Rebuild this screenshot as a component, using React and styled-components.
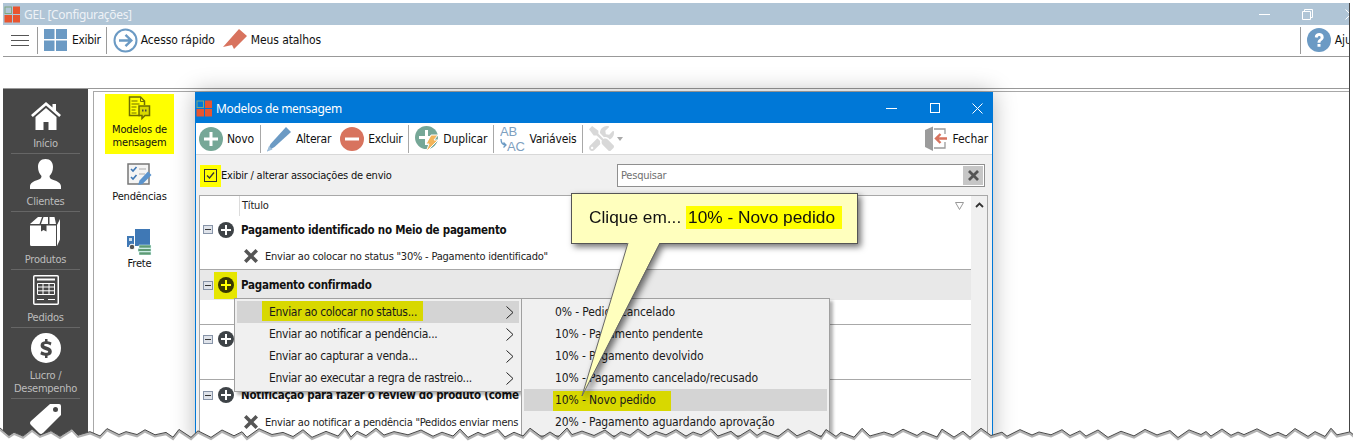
import React from "react";
import styled, { createGlobalStyle } from "styled-components";
import { FaTools } from "react-icons/fa";

const Global = createGlobalStyle`
  html, body { margin: 0; background: #fff; }
  body { font-family: "DejaVu Sans", "Liberation Sans", sans-serif; font-stretch: condensed; font-size: 12px; color: #111; }
  * { box-sizing: border-box; }
`;

const Page = styled.div`
  position: relative;
  width: 1353px;
  height: 448px;
  overflow: hidden;
  background: #fff;
`;
const AppWindow = styled.div`
  margin: 3px 0 0 3px;
  width: 1347px;
  height: 440px;
  display: flex;
  flex-direction: column;
  overflow: hidden;
  background: #fff;
  border-right: 1px solid #444;
`;
const TitleBar = styled.div`
  height: 22px;
  flex: none;
  display: flex;
  align-items: center;
  background: #b0c5d6;
  color: #eef2f6;
  padding-left: 21px;
  font-family: "Noto Sans", sans-serif;
  font-stretch: normal;
  position: relative;
`;
const LogoSlot = styled.span`
  position: absolute;
  left: ${(p) => p.$left}px;
  top: ${(p) => p.$top}px;
  display: flex;
`;
const Caption = styled.div`
  flex: 1;
  font-size: 12px;
  letter-spacing: -0.33px;
`;
const Controls = styled.div`
  display: flex;
  align-items: center;
  width: ${(p) => p.$width}px;
  justify-content: space-between;
  margin-right: ${(p) => p.$right}px;
  flex: none;
`;
const MainBar = styled.div`
  height: 32px;
  flex: none;
  display: flex;
  align-items: center;
  border-bottom: 1px solid #999;
  padding-bottom: 1px;
`;
const Burger = styled.div`
  width: 34px;
  display: flex;
  justify-content: center;
`;
const VSep = styled.span`
  width: 1px;
  height: 27px;
  background: #9a9a9a;
  flex: none;
`;
const BarButton = styled.div`
  display: flex;
  align-items: center;
  flex: none;
  gap: ${(p) => p.$gap ?? 4}px;
  padding: 0 ${(p) => p.$pr ?? 0}px 0 ${(p) => p.$pl ?? 0}px;
  margin-right: ${(p) => p.$mr ?? 0}px;
  white-space: nowrap;
  letter-spacing: ${(p) => p.$ls ?? -0.1}px;
`;
const Blank = styled.div`
  height: 32px;
  flex: none;
  border-bottom: 1px solid #999;
`;
const Main = styled.div`
  flex: 1;
  display: flex;
  min-height: 0;
`;
const Sidebar = styled.nav`
  width: 85px;
  flex: none;
  background: #474747;
  padding-top: 7px;
  display: flex;
  flex-direction: column;
  align-items: stretch;
`;
const NavItem = styled.div`
  flex: none;
  margin: 0 8px;
  padding: 5px 0 3px;
  min-height: 58px;
  display: flex;
  flex-direction: column;
  align-items: center;
  border-bottom: 1px solid #666;
`;
const NavIcon = styled.div`
  height: 30px;
  display: flex;
  align-items: center;
  justify-content: center;
`;
const NavLabel = styled.div`
  margin-top: 6px;
  line-height: 13px;
  font-size: 11px;
  letter-spacing: -0.25px;
  color: #bdbdbd;
  text-align: center;
  white-space: nowrap;
`;
const Panel = styled.div`
  margin: 2px 0 0 5px;
  flex: 1;
  border-left: 1px solid #a8a8a8;
  border-top: 1px solid #a8a8a8;
  padding: 2px 0 0 11px;
  display: flex;
  flex-direction: column;
  gap: 7px;
`;
const Tile = styled.div`
  width: 69px;
  height: 60px;
  padding-top: 1px;
  display: flex;
  flex-direction: column;
  align-items: center;
  background: ${(p) => (p.$on ? "#ffff00" : "transparent")};
`;
const TileIcon = styled.div`
  height: 26px;
  display: flex;
  align-items: center;
  justify-content: center;
`;
const TileLabel = styled.div`
  margin-top: 2px;
  line-height: 13px;
  font-size: 11px;
  letter-spacing: -0.15px;
  text-align: center;
  white-space: nowrap;
`;
const Dialog = styled.section`
  position: absolute;
  left: 195px;
  top: 92px;
  width: 798px;
  height: 356px;
  border: 1px solid #0078d7;
  border-bottom: 0;
  background: #f0f0f0;
  box-shadow: 0 0 22px rgba(0, 0, 0, 0.28);
  display: flex;
  flex-direction: column;
`;
const DialogTitle = styled.div`
  height: 30px;
  flex: none;
  background: #0078d7;
  color: #fff;
  display: flex;
  align-items: center;
  padding-left: 20px;
  font-family: "Noto Sans", sans-serif;
  font-stretch: normal;
  font-size: 12px;
  position: relative;
`;
const DialogBar = styled.div`
  height: 32px;
  flex: none;
  background: #fff;
  border-bottom: 1px solid #d8d8d8;
  display: flex;
  align-items: center;
  padding-left: 3px;
`;
const ToolSep = styled(VSep)`
  height: 28px;
  background: #a8a8a8;
  margin: 0 6px;
`;
const Spacer = styled.div`
  flex: 1;
`;
const FilterRow = styled.div`
  height: 23px;
  margin-top: 9px;
  flex: none;
  display: flex;
  align-items: center;
  padding-left: 4px;
  font-size: 11px;
  letter-spacing: -0.22px;
`;
const CheckMark = styled.span`
  width: 21px;
  height: 22px;
  background: #ffff00;
  display: flex;
  align-items: center;
  justify-content: center;
  flex: none;
`;
const Search = styled.div`
  margin-left: auto;
  margin-right: 7px;
  width: 368px;
  height: 23px;
  border: 1px solid #8f8f8f;
  background: #fff;
  display: flex;
  align-items: center;
  padding: 1px;
  color: #707070;
`;
const SearchText = styled.span`
  flex: 1;
  padding-left: 2px;
`;
const SearchClear = styled.span`
  width: 20px;
  height: 19px;
  background: #c6c6c6;
  display: flex;
  align-items: center;
  justify-content: center;
`;
const Grid = styled.div`
  margin: 8px 0 0 3px;
  width: 789px;
  flex: 1;
  min-height: 0;
  background: #fff;
  border: 1px solid #a8a8a8;
  border-bottom: 0;
  display: flex;
  overflow: hidden;
`;
const GridBody = styled.div`
  width: 771px;
  flex: none;
`;
const GridHead = styled.div`
  height: 20px;
  display: flex;
  align-items: center;
  position: relative;
`;
const HeadCell = styled.div`
  margin-left: 39px;
  padding-left: 2px;
  height: 20px;
  line-height: 19px;
  font-size: 11px;
  letter-spacing: -0.2px;
  border-left: 1px solid #dcdcdc;
  flex: 1;
  color: #222;
`;
const FilterGlyph = styled.span`
  margin-right: 7px;
  display: flex;
`;
const Group = styled.div`
  border-bottom: ${(p) => (p.$last ? 0 : "1px solid #a8a8a8")};
`;
const GroupHead = styled.div`
  height: ${(p) => p.$h}px;
  display: flex;
  align-items: center;
  padding-left: 3px;
  background: ${(p) => (p.$on ? "#e8e8e8" : "#fff")};
`;
const Toggle = styled.span`
  width: 10px;
  height: 9px;
  border: 1px solid #8794a8;
  background: #dfe3ea;
  display: flex;
  align-items: center;
  justify-content: center;
  flex: none;
  &::after {
    content: "";
    width: 6px;
    height: 1px;
    background: #333;
  }
`;
const AddSlot = styled.span`
  width: 23px;
  height: 27px;
  margin: 0 4px 0 1px;
  display: flex;
  align-items: center;
  justify-content: center;
  background: ${(p) => (p.$on ? "#e6e600" : "transparent")};
  flex: none;
`;
const GroupName = styled.b`
  font-weight: 700;
  font-size: 11.5px;
  white-space: nowrap;
  letter-spacing: -0.25px;
`;
const Child = styled.div`
  height: ${(p) => p.$h}px;
  display: flex;
  align-items: center;
  gap: 7px;
  padding-left: 44px;
  white-space: nowrap;
  color: #222;
  font-size: 11px;
  letter-spacing: -0.22px;
`;
const Scroll = styled.div`
  width: 16px;
  background: #f0f0f0;
  flex: none;
  display: flex;
  justify-content: center;
  padding-top: 6px;
`;
const Menu = styled.div`
  position: absolute;
  left: ${(p) => p.$left}px;
  top: 298px;
  width: ${(p) => p.$width}px;
  background: #f0f0f0;
  border: 1px solid #a0a0a0;
  padding: 2px;
  box-shadow: 3px 3px 3px rgba(0, 0, 0, 0.3);
`;
const MenuItem = styled.div`
  height: 22px;
  display: flex;
  align-items: center;
  position: relative;
  padding-left: ${(p) => p.$pad}px;
  letter-spacing: ${(p) => p.$ls}px;
  background: ${(p) => (p.$on ? "#d4d4d4" : "transparent")};
  white-space: nowrap;
  color: #1a1a1a;
`;
const Mark = styled.span`
  background: #d8d800;
  height: 20px;
  align-self: ${(p) => (p.$end ? "flex-end" : "flex-start")};
  line-height: ${(p) => (p.$end ? 18 : 22)}px;
  margin-left: -${(p) => p.$l}px;
  padding: 0 ${(p) => p.$r}px 0 ${(p) => p.$l}px;
`;
const MenuCaret = styled.span`
  position: absolute;
  right: 5px;
  top: 5px;
  display: flex;
`;
const Callout = styled.div`
  position: absolute;
  left: 571px;
  top: 193px;
  width: 287px;
  height: 51px;
  filter: drop-shadow(3px 3px 3px rgba(0, 0, 0, 0.55));
`;
const CalloutBox = styled.div`
  height: 100%;
  background: #ffffbe;
  border: 1px solid #555;
  padding: 12px 0 0 17px;
  font-family: "Liberation Sans", Arial, sans-serif;
  font-stretch: normal;
  font-size: 17.3px;
  line-height: 23px;
  color: #111;
  white-space: nowrap;
`;
const CalloutMark = styled.span`
  background: #ffff00;
  padding: 0 7px 0 2px;
  display: inline-block;
`;
const CalloutTail = styled.svg`
  position: absolute;
  left: 0;
  top: 0;
  overflow: visible;
`;
const Torn = styled.svg`
  position: absolute;
  left: 0;
  top: 420px;
`;

/* ---------- drawings ---------- */
const Logo = () => (
  <svg width="17" height="17" viewBox="0 0 17 17">
    <rect x="1" y="1" width="6.5" height="6.5" fill="none" stroke="#7fa87f" />
    <rect x="9" y="0.5" width="7" height="7.5" fill="#e8552f" />
    <rect x="0.5" y="9" width="7.5" height="7.5" fill="#e8552f" />
    <rect x="9" y="9" width="7" height="7.5" fill="#e8552f" />
  </svg>
);
const Grid4 = () => (
  <svg width="23" height="22" viewBox="0 0 23 22">
    <path d="M0 0h10.500v10H0zM12 0h11v10H12zM0 11.500h10.500V22H0zM12 11.500h11V22H12z" fill="#6b9ac4" />
  </svg>
);
const ArrowCircle = () => (
  <svg width="25" height="25" viewBox="0 0 25 25" fill="none" stroke="#6b9ac4">
    <circle cx="12.500" cy="12.500" r="11" strokeWidth="2" />
    <path d="M6 12.500h12M12.500 6.800l5.800 5.700-5.800 5.700" strokeWidth="2.400" />
  </svg>
);
const Tag = () => (
  <svg width="25" height="24" viewBox="0 0 25 24">
    <path d="M16 1l8 7-13 13-2-4-9 2z" fill="#d8735e" />
  </svg>
);
const Help = () => (
  <svg width="24" height="24" viewBox="0 0 24 24">
    <circle cx="12" cy="12" r="12" fill="#6b9ac4" />
    <path d="M7.800 9.300c0-5.600 8.900-5.600 8.900 0 0 3.200-3.200 3-3.200 5.400h-3c0-3.500 3.100-3.400 3.100-5.300 0-1.900-2.800-1.900-3 .4zM10.500 16h3v2.800h-3z" fill="#fff" />
  </svg>
);
const Home = () => (
  <svg width="30" height="28" viewBox="0 0 30 28" fill="#fff">
    <path d="M15 0L0 13l1.800 2L15 3.500 28.200 15l1.800-2-5-4.400V2h-3.500v3.500z" />
    <path d="M15 6L4.500 15v13h8v-8h5v8h8V15z" />
  </svg>
);
const Person = () => (
  <svg width="31" height="30" viewBox="0 0 31 30" fill="#fff">
    <path d="M15.500 0c5 0 7.500 3.500 7.500 8 0 4-1.500 7-3.500 9 0 2 1 3 4 4 4 1.300 7.500 3 7.500 6.500V30H0v-2.500C0 24 3.500 22.300 7.500 21c3-1 4-2 4-4-2-2-3.500-5-3.500-9 0-4.500 2.500-8 7.500-8z" />
  </svg>
);
const BoxIcon = () => (
  <svg width="31" height="30" viewBox="0 0 31 30" fill="#fff">
    <path d="M0 7l8-7h4l-2.500 7zM11 7l2.500-7H18v7zM0 8.500h11v6l2.500-1.500 3 1.500v-6h9.500V29H1.500Q0 29 0 27.500zM19.500 7V0h5L26 7zM27 8l3-6v20.500L27 29z" />
  </svg>
);
const Sheet = () => (
  <svg width="26" height="30" viewBox="0 0 26 30" fill="none" stroke="#fff">
    <rect x="0.750" y="0.750" width="24.500" height="28.500" rx="1" strokeWidth="1.500" />
    <path d="M4 4.500h18" strokeWidth="2" />
    <path d="M4.500 8.500h17v11h-17zM4.500 12h17M4.500 15.800h17M10 8.500v11M16 8.500v11" strokeWidth="1" />
    <path d="M4 24.500h7M15 24.500h7" strokeWidth="1.200" />
  </svg>
);
const Dollar = () => (
  <svg width="30" height="30" viewBox="0 0 30 30">
    <circle cx="15" cy="15" r="15" fill="#fff" />
    <path d="M14 6h2.500v2.200c1.500.2 3 .6 4 1.200l-.9 3c-1.500-.8-3.300-1.300-4.700-1.300-1.200 0-1.800.4-1.800 1 0 .8 1 1.100 3 1.700 2.800.9 4.700 2 4.700 4.600 0 2.400-1.600 3.900-4.300 4.300V25H14v-2.200c-1.800-.2-3.500-.7-4.700-1.500l1-3c1.500.9 3.300 1.500 5 1.500 1.200 0 1.900-.4 1.900-1.100 0-.8-1-1.200-3-1.800-2.700-.9-4.600-2-4.600-4.500 0-2.300 1.600-3.900 4.400-4.200z" fill="#474747" />
  </svg>
);
const PriceTag = () => (
  <svg width="31" height="32" viewBox="0 0 31 32" fill="#fff">
    <path d="M20 1h9q2 0 2 2v9L13 30q-2 2-4 0L1 22q-2-2 0-4zM25.500 4a2.500 2.500 0 100 5 2.500 2.500 0 000-5z" fillRule="evenodd" />
  </svg>
);
const DocChat = () => (
  <svg width="23" height="25" viewBox="0 0 23 25" fill="none" stroke="#6e6e00">
    <path d="M12 19.500H1.500V1h11l4 4v4" strokeWidth="1.500" />
    <path d="M12.500 1v4.500h4" strokeWidth="1" />
    <path d="M3.500 5h6M3.500 8h8M3.500 11h5M3.500 14h4M3.500 17h5" strokeWidth="1.200" />
    <path d="M11 10h10.500v9.500H17l-3 3v-3h-3z" fill="#d8d800" strokeWidth="1.500" />
    <path d="M14 14.500h1.500M17 14.500h1.500" strokeWidth="2" stroke="#444" />
  </svg>
);
const Checklist = () => (
  <svg width="25" height="25" viewBox="0 0 25 25" fill="none">
    <path d="M1 1h21v20H1z" fill="#f4f4f4" stroke="#777" strokeWidth="1.500" />
    <path d="M4 6l2 2 3.500-4M4 14l2 2 3.500-4" stroke="#3f78b5" strokeWidth="1.600" />
    <path d="M12 6h7M12 11h6" stroke="#aaa" />
    <path d="M11 22l1.500-4.500L21 8.500l3.500 3.500L15.500 21z" fill="#5b93cc" />
  </svg>
);
const Truck = () => (
  <svg width="25" height="26" viewBox="0 0 25 26">
    <path d="M8 0h15v17H8z" fill="#3f78b5" />
    <path d="M0 7h7v11H0z" fill="#3f78b5" />
    <path d="M2 9h3v3H2z" fill="#cfe0ee" />
    <circle cx="5" cy="18" r="2.800" fill="#555" stroke="#fff" />
    <path d="M12 16h12v3H12zM11 19.500h13v3H11zM12 23h12v3H12z" fill="#5f9a74" stroke="#dff" strokeWidth=".5" />
  </svg>
);
const Circle = ({ fill, glyph, size = 24 }) => (
  <svg width={size} height={size} viewBox="0 0 24 24">
    <circle cx="12" cy="12" r="12" fill={fill} />
    <path d={glyph === "minus" ? "M5 10.500h14v3H5z" : "M10.500 5h3v5.500H19v3h-5.500V19h-3v-5.500H5v-3h5.500z"} fill="#fff" />
  </svg>
);
const Pencil = () => (
  <svg width="25" height="26" viewBox="0 0 25 26">
    <path d="M19 1l5 5L7.500 21 0 25.500 3.500 18z" fill="#6b9ac4" />
    <path d="M0 25.500l2-5.500 3.500 3.500z" fill="#9fbfdb" />
  </svg>
);
const Duplicate = () => (
  <svg width="24" height="26" viewBox="0 0 24 26">
    <circle cx="11.500" cy="11.500" r="11.500" fill="#76a797" />
    <path d="M10 4h3v6h6v3h-6v6h-3v-6H4v-3h6z" fill="#fff" />
    <path d="M16 9h7l-4 5h4L11 26l3-8h-3z" fill="#f2b45a" stroke="#fff" />
  </svg>
);
const Variables = () => (
  <svg width="26" height="28" viewBox="0 0 26 28" fill="none">
    <text x="0" y="11" fontSize="13" fill="#7e9fbf" fontFamily="Liberation Sans">AB</text>
    <text x="7" y="26" fontSize="13" fill="#7e9fbf" fontFamily="Liberation Sans">AC</text>
    <path d="M1 14q0 6 5 6M3.500 17.500L6 20l-2.500 2.500" stroke="#6b9ac4" strokeWidth="1.300" />
  </svg>
);
const Caret = () => (
  <svg width="6" height="4" viewBox="0 0 6 4"><path d="M0 0h6L3 4z" fill="#aaa" /></svg>
);
const Exit = () => (
  <svg width="23" height="25" viewBox="0 0 23 25" fill="none">
    <path d="M0 4l8-3.500v24.500L0 21z" fill="#9b9b9b" />
    <path d="M9 3h11v5M20 16v6H9" stroke="#9b9b9b" strokeWidth="1.300" />
    <path d="M11 12.500h11M15.500 8l-4.500 4.500 4.500 4.500" stroke="#d8735e" strokeWidth="2.400" />
  </svg>
);
const CrossX = ({ size = 14, color = "#555" }) => (
  <svg width={size} height={size} viewBox="0 0 14 14">
    <path d="M2.500 0L7 4.500 11.500 0 14 2.500 9.500 7 14 11.500 11.500 14 7 9.500 2.500 14 0 11.500 4.500 7 0 2.500z" fill={color} />
  </svg>
);
const Tick = () => (
  <svg width="13" height="13" viewBox="0 0 13 13">
    <rect x=".5" y=".5" width="12" height="12" fill="none" stroke="#333" />
    <path d="M3 6.500l2.500 2.500L10 3.500" fill="none" stroke="#333" strokeWidth="1.300" />
  </svg>
);
const AddDot = ({ on }) => (
  <svg width="16" height="16" viewBox="0 0 16 16">
    <circle cx="8" cy="8" r="8" fill={on ? "#383800" : "#3e4347"} />
    <path d="M7 3h2v4h4v2H9v4H7V9H3V7h4z" fill={on ? "#ffff00" : "#fff"} />
  </svg>
);
const Chevron = () => (
  <svg width="8" height="13" viewBox="0 0 8 13" fill="none">
    <path d="M.5.500l6.500 6-6.500 6" stroke="#222" />
  </svg>
);
const Minimize = ({ color }) => (
  <svg width="11" height="11" viewBox="0 0 11 11"><path d="M0 5.500h11" stroke={color} /></svg>
);
const Maximize = ({ color }) => (
  <svg width="10" height="10" viewBox="0 0 10 10"><rect x=".5" y=".5" width="9" height="9" fill="none" stroke={color} /></svg>
);
const Restore = ({ color }) => (
  <svg width="11" height="11" viewBox="0 0 11 11" fill="none" stroke={color}>
    <path d="M.5 2.500h8v8h-8zM2.500 2.500v-2h8v8h-2" />
  </svg>
);
const Close = ({ color }) => (
  <svg width="11" height="11" viewBox="0 0 11 11"><path d="M.5.500l10 10M10.500.500l-10 10" stroke={color} /></svg>
);

/* torn paper edge */
const tornPoints = (() => {
  const pts = [];
  let seed = 11;
  const rnd = () => {
    seed = (seed * 16807) % 2147483647;
    return seed / 2147483647;
  };
  let x = 0;
  let i = 0;
  while (x < 1360) {
    const phase = i % 4;
    const y = phase === 0 ? 8 + rnd() * 2 : phase === 2 ? 10.500 + rnd() * 2 : 14.500 + rnd() * 3;
    pts.push([Math.round(x), y]);
    x += 5 + rnd() * 9;
    i += 1;
  }
  return pts;
})();
const line = tornPoints.map((p) => p.join(",")).join(" ");
const shade = tornPoints.map((p) => `${p[0]},${p[1] + 1.5}`).join(" ");
const TornEdge = () => (
  <Torn width="1353" height="28" viewBox="0 0 1353 28">
    <polygon points={`0,28 ${line} 1353,28`} fill="#fff" />
    <polyline points={shade} fill="none" stroke="rgba(0,0,0,.3)" strokeWidth="2.500" />
    <polyline points={line} fill="none" stroke="#4a4a4a" strokeWidth="1" />
  </Torn>
);

/* ---------- data ---------- */
const nav = [
  { icon: <Home />, label: ["Início"] },
  { icon: <Person />, label: ["Clientes"] },
  { icon: <BoxIcon />, label: ["Produtos"] },
  { icon: <Sheet />, label: ["Pedidos"] },
  { icon: <Dollar />, label: ["Lucro /", "Desempenho"] },
  { icon: <PriceTag />, label: [] },
];
const groups = [
  { head: 27, name: "Pagamento identificado no Meio de pagamento", child: 'Enviar ao colocar no status "30% - Pagamento identificado"', ch: 26 },
  { head: 30, name: "Pagamento confirmado", on: true, child: "", ch: 24 },
  { head: 28, name: "", child: "", ch: 26 },
  { head: 30, name: "Notificação para fazer o review do produto (come", child: 'Enviar ao notificar a pendência "Pedidos enviar mens', ch: 24, last: true },
];
const menu1 = [
  "Enviar ao colocar no status...",
  "Enviar ao notificar a pendência...",
  "Enviar ao capturar a venda...",
  "Enviar ao executar a regra de rastreio...",
];
const menu2 = [
  "0% - Pedido cancelado",
  "10% - Pagamento pendente",
  "10% - Pagamento devolvido",
  "10% - Pagamento cancelado/recusado",
  "10% - Novo pedido",
  "20% - Pagamento aguardando aprovação",
];

export default function App() {
  return (
    <Page>
      <Global />
      <AppWindow>
        <TitleBar>
          <LogoSlot $left={1} $top={3}><Logo /></LogoSlot>
          <Caption>GEL [Configurações]</Caption>
          <Controls $width={97} $right={-7}>
            <Minimize color="#fff" />
            <Restore color="#fff" />
            <Close color="#fff" />
          </Controls>
        </TitleBar>
        <MainBar>
          <Burger>
            <svg width="18" height="11" viewBox="0 0 18 11"><path d="M0 .5h18M0 5.500h18M0 10.500h18" stroke="#555" /></svg>
          </Burger>
          <VSep />
          <BarButton $pl={6} $pr={5} $gap={5} $ls={-0.3}><Grid4 />Exibir</BarButton>
          <VSep />
          <BarButton $pl={6} $pr={8} $gap={3}><ArrowCircle />Acesso rápido</BarButton>
          <BarButton $gap={3}><Tag />Meus atalhos</BarButton>
          <Spacer />
          <VSep />
          <BarButton $pl={6} $gap={4} $mr={-16}><Help />Ajuda</BarButton>
        </MainBar>
        <Blank />
        <Main>
          <Sidebar>
            {nav.map((n, i) => (
              <NavItem key={i}>
                <NavIcon>{n.icon}</NavIcon>
                <NavLabel>{n.label.map((l) => <div key={l}>{l}</div>)}</NavLabel>
              </NavItem>
            ))}
          </Sidebar>
          <Panel>
            <Tile $on>
              <TileIcon><DocChat /></TileIcon>
              <TileLabel>Modelos de<br />mensagem</TileLabel>
            </Tile>
            <Tile>
              <TileIcon><Checklist /></TileIcon>
              <TileLabel>Pendências</TileLabel>
            </Tile>
            <Tile>
              <TileIcon><Truck /></TileIcon>
              <TileLabel>Frete</TileLabel>
            </Tile>
          </Panel>
        </Main>
      </AppWindow>

      <Dialog>
        <DialogTitle>
          <LogoSlot $left={0} $top={7}><Logo /></LogoSlot>
          <Caption>Modelos de mensagem</Caption>
          <Controls $width={97} $right={9}>
            <Minimize color="#fff" />
            <Maximize color="#fff" />
            <Close color="#fff" />
          </Controls>
        </DialogTitle>
        <DialogBar>
          <BarButton $ls={-0.2}><Circle fill="#76a797" />Novo</BarButton>
          <ToolSep />
          <BarButton $ls={-0.2}><Pencil />Alterar</BarButton>
          <BarButton $pl={9} $ls={-0.3}><Circle fill="#d8735e" glyph="minus" />Excluir</BarButton>
          <ToolSep />
          <BarButton $ls={-0.12}><Duplicate />Duplicar</BarButton>
          <ToolSep />
          <BarButton $gap={3} $ls={-0.2}><Variables />Variáveis</BarButton>
          <ToolSep />
          <BarButton $gap={3}><FaTools size={25} color="#d8d8d8" /><Caret /></BarButton>
          <Spacer />
          <BarButton $pr={4} $gap={5}><Exit />Fechar</BarButton>
        </DialogBar>
        <FilterRow>
          <CheckMark><Tick /></CheckMark>
          Exibir / alterar associações de envio
          <Search>
            <SearchText>Pesquisar</SearchText>
            <SearchClear><CrossX size={11} color="#555" /></SearchClear>
          </Search>
        </FilterRow>
        <Grid>
          <GridBody>
            <GridHead>
              <HeadCell>Título</HeadCell>
              <FilterGlyph>
                <svg width="9" height="8" viewBox="0 0 9 8"><path d="M.5.500h8L4.500 7.500z" fill="none" stroke="#999" /></svg>
              </FilterGlyph>
            </GridHead>
            {groups.map((g, i) => (
              <Group key={i} $last={g.last}>
                <GroupHead $h={g.head} $on={g.on}>
                  <Toggle />
                  <AddSlot $on={g.on}><AddDot on={g.on} /></AddSlot>
                  {g.name && <GroupName>{g.name}</GroupName>}
                </GroupHead>
                <Child $h={g.ch}>
                  {g.child && <CrossX />}
                  {g.child}
                </Child>
              </Group>
            ))}
          </GridBody>
          <Scroll>
            <svg width="9" height="6" viewBox="0 0 9 6"><path d="M1 5l3.500-3.500L8 5" fill="none" stroke="#333" strokeWidth="1.800" /></svg>
          </Scroll>
        </Grid>
      </Dialog>

      <Menu $left={234} $width={288}>
        {menu1.map((m, i) => (
          <MenuItem key={m} $on={i === 0} $pad={32} $ls={-0.3}>
            {i === 0 ? <Mark $l={7} $r={6}>{m}</Mark> : m}
            <MenuCaret><Chevron /></MenuCaret>
          </MenuItem>
        ))}
      </Menu>
      <Menu $left={521} $width={309}>
        {menu2.map((m, i) => (
          <MenuItem key={m} $on={i === 4} $pad={31} $ls={-0.12}>
            {i === 4 ? <Mark $l={2} $r={15} $end>{m}</Mark> : m}
          </MenuItem>
        ))}
      </Menu>

      <Callout>
        <CalloutBox>
          Clique em... <CalloutMark>10% - Novo pedido</CalloutMark>
        </CalloutBox>
        <CalloutTail width="287" height="51">
          <polygon points="57,49 11,203 89,49" fill="#ffffbe" />
          <polyline points="57,50 11,203 89,50" fill="none" stroke="#666" />
        </CalloutTail>
      </Callout>

      <TornEdge />
    </Page>
  );
}
